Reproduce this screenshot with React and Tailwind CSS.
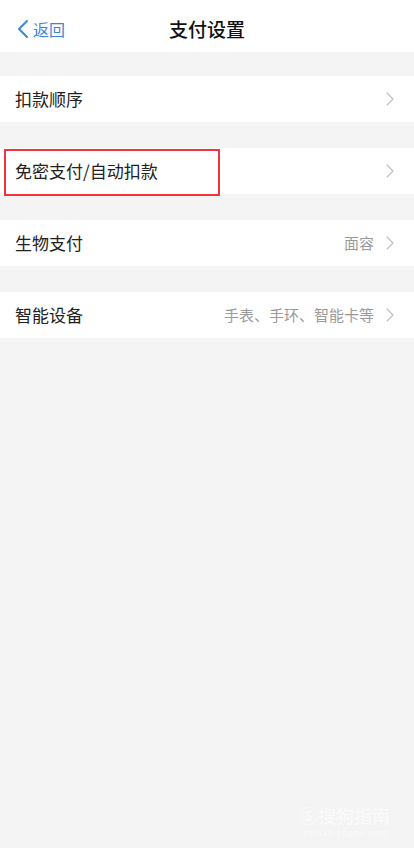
import React from "react";

const Chevron = () => (
  <svg width="8" height="14" viewBox="0 0 8 14" className="shrink-0">
    <path d="M1 1 L7 7 L1 13" fill="none" stroke="#c4c4c4" strokeWidth="1.4" strokeLinecap="round" strokeLinejoin="round" />
  </svg>
);

const Row = ({ label, value, boxed }) => (
  <div className="relative flex items-center h-[46px] bg-white pl-[15px] pr-[20px]">
    {boxed && (
      <div className="absolute left-[4px] top-[1px] w-[216px] h-[47px] border-[2.5px] border-[#f0363c]" />
    )}
    <span className="text-[17px] text-[#222]">{label}</span>
    <div className="ml-auto flex items-center gap-[12px]">
      {value && <span className="text-[15px] text-[#9a9a9a]">{value}</span>}
      <Chevron />
    </div>
  </div>
);

export default function App() {
  return (
    <div
      className="relative w-[414px] h-[848px] bg-[#f4f4f4] overflow-hidden"
      style={{ fontFamily: '"Noto Sans CJK SC", "Noto Sans", sans-serif' }}
    >
      <div className="relative flex items-center h-[52px] pt-[6px] bg-white">
        <div className="flex items-center pl-[17px] gap-[4px] text-[#3a86d8]">
          <svg width="12" height="20" viewBox="0 0 12 20">
            <path d="M10 2 L2 10 L10 18" fill="none" stroke="#3a86d8" strokeWidth="2" strokeLinecap="round" strokeLinejoin="round" />
          </svg>
          <span className="text-[16px]">返回</span>
        </div>
        <div className="absolute left-0 right-0 text-center text-[19px] font-medium text-[#111] pointer-events-none">
          支付设置
        </div>
      </div>
      <div className="flex flex-col gap-[26px] pt-[24px]">
        <Row label="扣款顺序" />
        <Row label="免密支付/自动扣款" boxed />
        <Row label="生物支付" value="面容" />
        <Row label="智能设备" value="手表、手环、智能卡等" />
      </div>
      <div className="absolute right-[24px] bottom-[10px] flex flex-col items-center gap-[2px] text-white opacity-70">
        <span className="text-[18px] leading-[22px]">Ⓢ搜狗指南</span>
        <span className="text-[8px] leading-[10px] tracking-[1px]">zhinan.sogou.com</span>
      </div>
    </div>
  );
}
